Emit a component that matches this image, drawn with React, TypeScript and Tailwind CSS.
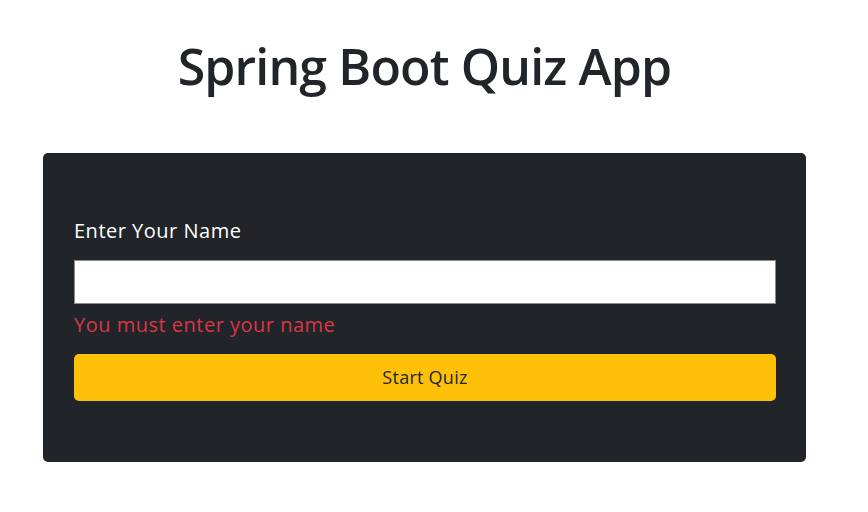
import { useState } from "react";

const font = "font-['Open_Sans',_'Noto_Sans',_sans-serif]";

export default function App() {
  const [name, setName] = useState("");

  return (
    <div className={`min-h-[512px] w-[868px] bg-white ${font} text-[#212529]`}>
      <div className="w-[849px] pt-[30px]">
        <h1 className="text-center text-[50px] leading-[72px] font-semibold tracking-[-0.85px]">
          Spring Boot Quiz App
        </h1>

        <div className="mt-[51px] ml-[43px] w-[763px] h-[309px] rounded-[5px] bg-[#212529] px-[31px] pt-[63px]">
          <label className="block text-[20px] leading-[30px] text-white tracking-[0.5px]">
            Enter Your Name
          </label>
          <input
            value={name}
            onChange={(e) => setName(e.target.value)}
            className="mt-[14px] block h-[44px] w-[702px] border border-[#8a8a8a] bg-white px-3 text-[18px] outline-none"
          />
          <p className="mt-[6px] text-[20px] leading-[30px] text-[#dc3545] tracking-[0.5px]">
            You must enter your name
          </p>
          <button className="mt-[14px] block h-[47px] w-[702px] rounded-[5px] bg-[#ffc107] text-[18px] text-[#212529] tracking-[0.25px]">
            Start Quiz
          </button>
        </div>
      </div>
    </div>
  );
}
